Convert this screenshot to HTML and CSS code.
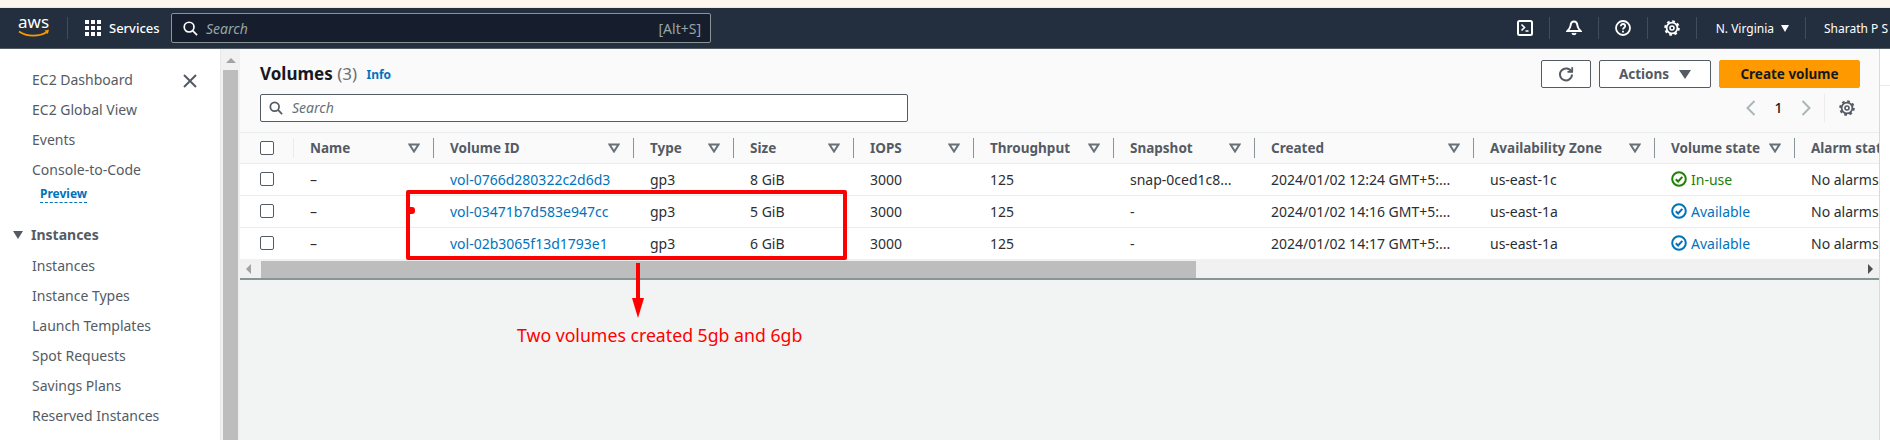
FILE: index.html
```html
<!DOCTYPE html>
<html lang="en">
  <head>
    <meta charset="utf-8">
    <title>Volumes | EC2</title>
    <link rel="stylesheet" href="styles.css">
  </head>
  <body>
    <!-- shared icons -->
    <svg class="defs">
      <symbol id="gear" viewBox="0 0 16 16"><circle cx="8" cy="8" r="5.4" stroke-width="1.8"/><circle cx="8" cy="8" r="6.8" stroke-width="2" stroke-dasharray="2.7 2.64"/><circle cx="8" cy="8" r="2" stroke-width="1.6"/></symbol>
      <symbol id="sort" viewBox="0 0 12 10"><path d="M1.5 1.500h9L6 8.500z"/></symbol>
      <symbol id="check" viewBox="0 0 16 16"><circle cx="8" cy="8" r="6.8"/><path d="M4.800 8.200l2.300 2.300 4.200-4.600"/></symbol>
    </svg>

    <div class="strip"></div>

    <header class="topnav">
      <svg class="aws-logo" viewBox="0 0 32 38" width="32" height="38">
        <text x="0" y="19" class="aws-text">aws</text>
        <path d="M1 22.500c8 5.500 20 5.500 28 .5" fill="none" stroke="#ff9900" stroke-width="1.8"/>
        <path d="M26.500 21.500l4.500-.8-1.200 4.300z" fill="#ff9900"/>
      </svg>
      <span class="nav-sep first"></span>
      <svg class="grid-icon" viewBox="0 0 16 16" width="16" height="16" fill="#fff">
        <rect x="0" y="0" width="4" height="4"/><rect x="6" y="0" width="4" height="4"/><rect x="12" y="0" width="4" height="4"/>
        <rect x="0" y="6" width="4" height="4"/><rect x="6" y="6" width="4" height="4"/><rect x="12" y="6" width="4" height="4"/>
        <rect x="0" y="12" width="4" height="4"/><rect x="6" y="12" width="4" height="4"/><rect x="12" y="12" width="4" height="4"/>
      </svg>
      <span class="services">Services</span>
      <div class="nav-search">
        <svg viewBox="0 0 16 16" width="15" height="15" fill="none" stroke="#fff" stroke-width="1.8"><circle cx="6.500" cy="6.500" r="5.200"/><path d="M10.500 10.500l4.500 4.500"/></svg>
        <span class="nav-search-text">Search</span>
        <span class="nav-search-key">[Alt+S]</span>
      </div>
      <div class="nav-right">
        <svg viewBox="0 0 16 16" width="16" height="16" fill="none" stroke="#fff" stroke-width="2"><rect x="1" y="1" width="14" height="14" rx="1.500"/><path d="M4.500 4.500l3 3-3 3M8.500 11h3" stroke-width="1.600"/></svg>
        <span class="nav-sep"></span>
        <svg viewBox="0 0 16 16" width="16" height="16" fill="none" stroke="#fff" stroke-width="2"><path d="M8 1.500c-2.200 0-3.200 1.800-3.400 4-.2 2.300-1.500 3.800-3.100 5.500h13c-1.600-1.700-2.900-3.200-3.100-5.500-.2-2.200-1.200-4-3.400-4z"/><path d="M6.300 13a1.800 1.800 0 0 0 3.400 0"/></svg>
        <span class="nav-sep"></span>
        <svg viewBox="0 0 16 16" width="16" height="16" fill="none" stroke="#fff" stroke-width="1.8"><circle cx="8" cy="8" r="7"/><path d="M5.800 6.200c0-1.400 1-2.200 2.200-2.200s2.200.8 2.200 2c0 1.700-2.200 1.700-2.200 3.400"/><path d="M8 10.800v1.700"/></svg>
        <span class="nav-sep"></span>
        <svg width="16" height="16" fill="none" stroke="#fff"><use href="#gear"/></svg>
        <span class="nav-sep"></span>
        <span class="region">N. Virginia</span>
        <span class="caret-white"></span>
        <span class="nav-sep"></span>
        <span class="user">Sharath P S</span>
      </div>
    </header>

    <div class="shell">
      <nav class="sidebar">
        <svg class="side-close" viewBox="0 0 14 14" width="14" height="14" fill="none" stroke="#545b64" stroke-width="2"><path d="M1 1l12 12M13 1L1 13"/></svg>
        <a class="side-link">EC2 Dashboard</a>
        <a class="side-link">EC2 Global View</a>
        <a class="side-link">Events</a>
        <a class="side-link">Console-to-Code</a>
        <a class="side-preview">Preview</a>
        <div class="side-group"><span class="caret-dark"></span>Instances</div>
        <a class="side-link">Instances</a>
        <a class="side-link">Instance Types</a>
        <a class="side-link">Launch Templates</a>
        <a class="side-link">Spot Requests</a>
        <a class="side-link">Savings Plans</a>
        <a class="side-link">Reserved Instances</a>
        <a class="side-link">Dedicated Hosts</a>
      </nav>
      <div class="side-scroll">
        <span class="arrow-up"></span>
        <div class="side-thumb"></div>
      </div>

      <main class="main">
        <section class="panel">
          <div class="panel-head">
            <h1 class="title">Volumes <span class="count">(3)</span> <a class="info">Info</a></h1>
            <div class="actions">
              <button class="btn btn-icon">
                <svg viewBox="0 0 16 16" width="16" height="16" fill="none" stroke="#545b64" stroke-width="2"><path d="M13.500 6a6 6 0 1 0 .5 2.500"/><path d="M9.500 5.800h4.700V1.200" stroke-width="1.800"/></svg>
              </button>
              <button class="btn">Actions <span class="caret-btn"></span></button>
              <button class="btn btn-primary">Create volume</button>
            </div>
          </div>
          <div class="filter-row">
            <div class="filter">
              <svg viewBox="0 0 16 16" width="14" height="14" fill="none" stroke="#545b64" stroke-width="2"><circle cx="6.500" cy="6.500" r="5"/><path d="M10.500 10.500l4.500 4.500"/></svg>
              <span class="filter-text">Search</span>
            </div>
            <div class="pager">
              <svg viewBox="0 0 10 16" width="10" height="16" fill="none" stroke="#aab7b8" stroke-width="2"><path d="M8.500 1L1.500 8l7 7"/></svg>
              <span class="page-num">1</span>
              <svg viewBox="0 0 10 16" width="10" height="16" fill="none" stroke="#aab7b8" stroke-width="2"><path d="M1.500 1l7 7-7 7"/></svg>
              <span class="pager-sep"></span>
              <svg width="16" height="16" fill="none" stroke="#545b64"><use href="#gear"/></svg>
            </div>
          </div>

          <div class="table-wrap">
            <table class="vol-table">
              <colgroup>
                <col class="c-check"><col class="c-name"><col class="c-id"><col class="c-type"><col class="c-size"><col class="c-iops"><col class="c-thr"><col class="c-snap"><col class="c-created"><col class="c-az"><col class="c-state"><col class="c-alarm">
              </colgroup>
              <thead>
                <tr>
                  <th class="check-cell"><span class="checkbox"></span></th>
                  <th><span class="th-in">Name <svg class="sort"><use href="#sort"/></svg></span></th>
                  <th><span class="th-in">Volume ID <svg class="sort"><use href="#sort"/></svg></span></th>
                  <th><span class="th-in">Type <svg class="sort"><use href="#sort"/></svg></span></th>
                  <th><span class="th-in">Size <svg class="sort"><use href="#sort"/></svg></span></th>
                  <th><span class="th-in">IOPS <svg class="sort"><use href="#sort"/></svg></span></th>
                  <th><span class="th-in">Throughput <svg class="sort"><use href="#sort"/></svg></span></th>
                  <th><span class="th-in">Snapshot <svg class="sort"><use href="#sort"/></svg></span></th>
                  <th><span class="th-in">Created <svg class="sort"><use href="#sort"/></svg></span></th>
                  <th><span class="th-in">Availability Zone <svg class="sort"><use href="#sort"/></svg></span></th>
                  <th><span class="th-in">Volume state <svg class="sort"><use href="#sort"/></svg></span></th>
                  <th><span class="th-in">Alarm status</span></th>
                </tr>
              </thead>
              <tbody>
                <tr>
                  <td class="check-cell"><span class="checkbox"></span></td>
                  <td>–</td>
                  <td><a class="vol-link">vol-0766d280322c2d6d3</a></td>
                  <td>gp3</td>
                  <td>8 GiB</td>
                  <td>3000</td>
                  <td>125</td>
                  <td>snap-0ced1c8...</td>
                  <td>2024/01/02 12:24 GMT+5:...</td>
                  <td>us-east-1c</td>
                  <td><span class="state ok"><svg class="state-icon"><use href="#check"/></svg>In-use</span></td>
                  <td>No alarms</td>
                </tr>
                <tr>
                  <td class="check-cell"><span class="checkbox"></span></td>
                  <td>–</td>
                  <td><a class="vol-link">vol-03471b7d583e947cc</a></td>
                  <td>gp3</td>
                  <td>5 GiB</td>
                  <td>3000</td>
                  <td>125</td>
                  <td>-</td>
                  <td>2024/01/02 14:16 GMT+5:...</td>
                  <td>us-east-1a</td>
                  <td><span class="state avail"><svg class="state-icon"><use href="#check"/></svg>Available</span></td>
                  <td>No alarms</td>
                </tr>
                <tr>
                  <td class="check-cell"><span class="checkbox"></span></td>
                  <td>–</td>
                  <td><a class="vol-link">vol-02b3065f13d1793e1</a></td>
                  <td>gp3</td>
                  <td>6 GiB</td>
                  <td>3000</td>
                  <td>125</td>
                  <td>-</td>
                  <td>2024/01/02 14:17 GMT+5:...</td>
                  <td>us-east-1a</td>
                  <td><span class="state avail"><svg class="state-icon"><use href="#check"/></svg>Available</span></td>
                  <td>No alarms</td>
                </tr>
              </tbody>
            </table>
          </div>
          <div class="h-scroll">
            <span class="arrow-left"></span>
            <div class="h-thumb"></div>
            <span class="arrow-right"></span>
          </div>
        </section>
      </main>
      <aside class="edge"><div class="edge-line"></div></aside>
    </div>

    <!-- red annotations drawn over the screenshot -->
    <div class="mark-box"><span class="mark-dot"></span></div>
    <svg class="mark-arrow" viewBox="0 0 14 58" width="14" height="58" fill="#f00">
      <rect x="5" y="2" width="4" height="36"/>
      <path d="M1 37h12l-6 20z"/>
    </svg>
    <div class="mark-text">Two volumes created 5gb and 6gb</div>
  </body>
</html>
```

FILE: styles.css
```css
* {
  box-sizing: border-box;
}

html, body {
  margin: 0;
  height: 440px;
  overflow: hidden;
}

body {
  font-family: "Noto Sans", sans-serif;
  font-size: 14px;
  color: #2a2e33;
  background: #fff;
  position: relative;
}

.defs {
  display: none;
}

.strip {
  height: 8px;
  background: #fff5ef;
  border-bottom: 1px solid #efe7e2;
}

/* Top navigation */
.topnav {
  height: 41px;
  background: #232f3e;
  border-bottom: 1px solid #545b64;
  display: flex;
  align-items: center;
  padding-left: 18px;
  color: #fff;
}

.aws-text {
  font-family: "Noto Sans", sans-serif;
  font-size: 17px;
  fill: #fff;
}

.nav-sep {
  width: 1px;
  height: 22px;
  background: #414d5c;
  flex: none;
}

.nav-sep.first {
  margin: 0 17px 0 17px;
}

.services {
  margin-left: 8px;
  font-size: 13px;
  font-weight: 500;
  width: 62px;
}

.nav-search {
  width: 540px;
  height: 30px;
  background: #161e2d;
  border: 1px solid #879596;
  border-radius: 2px;
  display: flex;
  align-items: center;
  padding: 0 9px 0 11px;
}

.nav-search-text {
  margin-left: 8px;
  font-style: italic;
  color: #95a5a6;
}

.nav-search-key {
  margin-left: auto;
  color: #95a5a6;
  font-size: 14px;
}

.nav-right {
  margin-left: auto;
  display: flex;
  align-items: center;
}

.nav-right .nav-sep {
  margin: 0 16px;
}

.region, .user {
  font-size: 12px;
  white-space: nowrap;
}

.region {
  margin-left: 3px;
}

.user {
  margin-left: 2px;
  width: 66px;
}

.caret-white {
  margin-left: 7px;
  border-left: 4.5px solid transparent;
  border-right: 4.5px solid transparent;
  border-top: 7px solid #fff;
}

/* Shell */
.shell {
  display: flex;
  height: 391px;
}

.sidebar {
  width: 220px;
  flex: none;
  background: #fff;
  position: relative;
  padding: 16px 0 0 32px;
  overflow: hidden;
  color: #545b64;
}

.side-close {
  position: absolute;
  left: 183px;
  top: 25px;
}

.side-link {
  display: block;
  height: 30px;
  line-height: 30px;
  font-size: 14px;
  white-space: nowrap;
}

.side-preview {
  display: block;
  width: fit-content;
  margin: 1px 0 0 8px;
  font-size: 12px;
  font-weight: 700;
  line-height: 16px;
  color: #0073bb;
  border-bottom: 1px dashed #0073bb;
}

.side-group {
  margin: 16px 0 0 -19px;
  height: 32px;
  line-height: 30px;
  font-weight: 700;
  display: flex;
  align-items: center;
  gap: 8px;
}

.caret-dark {
  border-left: 5.5px solid transparent;
  border-right: 5.5px solid transparent;
  border-top: 8px solid #545b64;
}

.side-scroll {
  width: 20px;
  flex: none;
  background: #f1f1f1;
  border-left: 1px solid #e8e8e8;
  padding: 9px 2px 0;
  overflow: hidden;
}

.arrow-up {
  display: block;
  width: 0;
  margin: 0 auto;
  border-left: 5px solid transparent;
  border-right: 5px solid transparent;
  border-bottom: 5px solid #a3a3a3;
}

.side-thumb {
  margin-top: 7px;
  height: 400px;
  background: #bdbdbd;
}

/* Main panel */
.main {
  width: 1639px;
  flex: none;
  background: #f2f3f3;
  overflow: hidden;
}

.panel {
  background: #fafafa;
}

.panel-head {
  display: flex;
  justify-content: space-between;
  padding: 11px 19px 0 20px;
  height: 41px;
}

.title {
  margin: 0;
  font-size: 17px;
  font-weight: 700;
  line-height: 28px;
  color: #16191f;
}

.count {
  font-weight: 400;
  color: #687078;
}

.info {
  margin-left: 5px;
  font-size: 12px;
  color: #0073bb;
  vertical-align: 1px;
}

.actions {
  display: flex;
  gap: 8px;
}

.btn {
  height: 28px;
  width: 112px;
  font-family: inherit;
  font-size: 13.5px;
  font-weight: 700;
  color: #545b64;
  background: #fff;
  border: 1px solid #545b64;
  border-radius: 2px;
  padding: 0;
  display: flex;
  align-items: center;
  justify-content: center;
  gap: 10px;
}

.btn-icon {
  width: 50px;
}

.btn-primary {
  width: 141px;
  background: #ff9900;
  border-color: #ff9900;
  color: #16191f;
}

.caret-btn {
  border-left: 6px solid transparent;
  border-right: 6px solid transparent;
  border-top: 9px solid #545b64;
}

.filter-row {
  display: flex;
  justify-content: space-between;
  align-items: center;
  padding: 0 24px 0 20px;
  height: 35px;
}

.filter {
  width: 648px;
  height: 28px;
  background: #fff;
  border: 1px solid #545b64;
  border-radius: 2px;
  display: flex;
  align-items: center;
  padding-left: 8px;
}

.filter-text {
  margin-left: 9px;
  font-size: 14px;
  font-style: italic;
  color: #687078;
}

.pager {
  display: flex;
  align-items: center;
}

.page-num {
  width: 45px;
  text-align: center;
  font-weight: 500;
  color: #16191f;
}

.pager-sep {
  width: 1px;
  height: 28px;
  background: #eaeded;
  margin: 0 14px 0 13px;
}

/* Table */
.table-wrap {
  overflow: hidden;
  border-top: 1px solid #eaeded;
  margin-top: 7px;
}

.vol-table {
  table-layout: fixed;
  border-collapse: collapse;
  width: 1670px;
  background: #fff;
}

.c-check { width: 53px; }
.c-name { width: 140px; }
.c-id { width: 200px; }
.c-type { width: 100px; }
.c-size { width: 120px; }
.c-iops { width: 120px; }
.c-thr { width: 140px; }
.c-snap { width: 141px; }
.c-created { width: 219px; }
.c-az { width: 181px; }
.c-state { width: 140px; }
.c-alarm { width: 116px; }

.vol-table th {
  height: 30px;
  padding: 0;
  background: #fafafa;
  border-bottom: 1px solid #eaeded;
  text-align: left;
  font-size: 13.5px;
  font-weight: 700;
  color: #545b64;
}

.th-in {
  display: flex;
  align-items: center;
  justify-content: space-between;
  height: 20px;
  padding: 0 13px 0 16px;
  border-left: 1px solid #879596;
  white-space: nowrap;
}

.check-cell + th .th-in {
  border-left-color: #eaeded;
}

.sort {
  width: 12px;
  height: 10px;
  fill: none;
  stroke: #687078;
  stroke-width: 2;
}

.vol-table td {
  height: 32px;
  padding: 0 0 0 17px;
  border-bottom: 1px solid #eaeded;
  font-size: 14px;
  white-space: nowrap;
  overflow: hidden;
}

.vol-table tr:last-child td {
  border-bottom: none;
}

.vol-table td.check-cell, .vol-table th.check-cell {
  padding-left: 20px;
}

.checkbox {
  display: block;
  width: 14px;
  height: 14px;
  background: #fff;
  border: 1px solid #545b64;
  border-radius: 2px;
}

.vol-link {
  color: #0073bb;
}

.state {
  display: flex;
  align-items: center;
  gap: 4px;
}

.state-icon {
  width: 16px;
  height: 16px;
  fill: none;
  stroke: currentColor;
  stroke-width: 2;
}

.ok {
  color: #1d8102;
}

.avail {
  color: #0073bb;
}

.h-scroll {
  height: 21px;
  background: #f1f1f1;
  border-bottom: 2px solid #879596;
  display: flex;
  align-items: center;
  position: relative;
}

.arrow-left {
  margin-left: 6px;
  border-top: 5px solid transparent;
  border-bottom: 5px solid transparent;
  border-right: 5px solid #a3a3a3;
}

.h-thumb {
  position: absolute;
  left: 21px;
  top: 2px;
  width: 935px;
  height: 17px;
  background: #bdbdbd;
}

.arrow-right {
  margin-left: auto;
  margin-right: 6px;
  border-top: 5px solid transparent;
  border-bottom: 5px solid transparent;
  border-left: 5px solid #505050;
}

.edge {
  flex: 1;
  border-left: 1px solid #d5dbdb;
  background: #fff;
}

.edge-line {
  height: 37px;
  border-bottom: 1px solid #eaeded;
}

/* Annotations */
.mark-box {
  position: absolute;
  left: 406px;
  top: 190px;
  width: 441px;
  height: 70px;
  border: 4px solid #f00;
  border-radius: 2px;
}

.mark-dot {
  position: absolute;
  left: 0;
  top: 13px;
  width: 5px;
  height: 7px;
  background: #f00;
  border-radius: 0 3px 3px 0;
}

.mark-arrow {
  position: absolute;
  left: 631px;
  top: 261px;
}

.mark-text {
  position: absolute;
  left: 517px;
  top: 322px;
  font-size: 17.7px;
  line-height: 26px;
  color: #f00;
  white-space: nowrap;
}
```
